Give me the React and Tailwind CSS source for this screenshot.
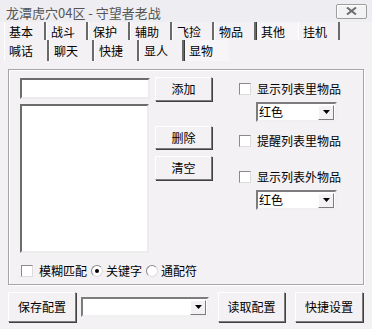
import React from 'react';

const FONT = { fontFamily: '"Noto Sans CJK SC", "Liberation Sans", sans-serif' };

const Raised = ({ className = '', children }) => (
  <div
    className={`flex items-center justify-center bg-[#f4f1f4] border border-t-white border-l-white border-r-[#7c7c7c] border-b-[#7c7c7c] shadow-[1px_1px_0_#404040] text-[12px] text-black ${className}`}
  >
    {children}
  </div>
);

const Check = () => (
  <span className="block w-[12px] h-[12px] bg-white border border-t-[#8a8a8a] border-l-[#8a8a8a] border-r-[#dcdcdc] border-b-[#dcdcdc] shrink-0" />
);

const Radio = ({ on }) => (
  <span className="flex items-center justify-center w-[12px] h-[12px] rounded-full bg-white border border-t-[#8a8a8a] border-l-[#8a8a8a] border-r-[#dcdcdc] border-b-[#dcdcdc] shrink-0">
    {on && <span className="block w-[4px] h-[4px] rounded-full bg-black" />}
  </span>
);

const Arrow = () => (
  <span className="flex items-center justify-center w-[16px] h-[15px] bg-[#f4f1f4] border border-t-white border-l-white border-r-[#7c7c7c] border-b-[#7c7c7c]">
    <svg width="7" height="4" viewBox="0 0 7 4">
      <path d="M0 0h7L3.5 4z" fill="#000" />
    </svg>
  </span>
);

const Select = ({ value, className = '' }) => (
  <div
    className={`flex items-center justify-between bg-white border-2 border-t-[#7c7c7c] border-l-[#7c7c7c] border-r-[#f0f0f0] border-b-[#f0f0f0] pr-[1px] ${className}`}
  >
    <span className="pl-[1px] text-[12px] leading-none text-black">{value}</span>
    <Arrow />
  </div>
);

const row1 = ['基本', '战斗', '保护', '辅助', '飞捡', '物品', '其他', '挂机'];
const row2 = ['喊话', '聊天', '快捷', '显人', '显物'];

const Tab = ({ label, active, wide }) => (
  <div
    className={`flex items-center ${wide ? 'w-[45px] h-[21px] pt-[1px]' : 'w-[42px] h-[18px] pt-[2px]'} pl-[4px] text-[12px] text-black border-l border-r-2 ${
      active ? 'border-l-[#3a3a3a] border-r-transparent bg-[#f7f5f7]' : 'border-l-white border-r-[#6a6a6a]'
    }`}
  >
    {label}
  </div>
);

export default function App() {
  return (
    <div className="w-[372px] h-[329px] bg-[#f4f1f4] overflow-hidden" style={FONT}>
      {/* title bar */}
      <div className="h-[22px] flex items-center justify-between pl-[6px] pr-[5px] bg-[#eeedf1]">
        <span className="pt-[2px] text-[13px] text-[#555] leading-none">龙潭虎穴04区 - 守望者老战</span>
        <div className="w-[31px] h-[15px] flex items-center justify-center rounded-[2px] border border-[#9c9c9c] bg-[#f2f2f4] shadow-[inset_1px_1px_0_#fff]">
          <svg width="11" height="8" viewBox="0 0 11 8">
            <path d="M1 0.5l9 7M10 0.5l-9 7" stroke="#6e6e6e" strokeWidth="2" />
          </svg>
        </div>
      </div>

      {/* tabs */}
      <div className="flex pl-[4px] h-[18px]">
        {row1.map((t) => (
          <Tab key={t} label={t} active={t === '其他'} />
        ))}
      </div>
      <div className="flex pl-[4px] h-[21px]">
        {row2.map((t) => (
          <Tab key={t} label={t} active={t === '显物'} wide />
        ))}
      </div>

      {/* group panel */}
      <div className="ml-[8px] mt-[8px] w-[356px] h-[216px] border border-[#a8a4a8] shadow-[inset_1px_1px_0_#fff,1px_1px_0_#fff] pt-[8px] pl-[11px]">
        <div className="flex">
          {/* left column */}
          <div className="w-[130px] flex flex-col">
            <div className="h-[21px] bg-white border-2 border-t-[#6c6c6c] border-l-[#6c6c6c] border-r-[#ececec] border-b-[#ececec]" />
            <div className="mt-[5px] h-[149px] w-[129px] bg-white border-2 border-t-[#6c6c6c] border-l-[#6c6c6c] border-r-[#ececec] border-b-[#ececec]" />
          </div>

          {/* middle buttons */}
          <div className="ml-[5px] -mt-[1px] flex flex-col">
            <Raised className="w-[57px] h-[24px]">添加</Raised>
            <Raised className="w-[57px] h-[23px] mt-[25px]">删除</Raised>
            <Raised className="w-[57px] h-[24px] mt-[7px]">清空</Raised>
          </div>

          {/* right options */}
          <div className="ml-[27px] flex flex-col">
            <div className="mt-[4px] h-[14px] flex items-center gap-[6px] text-[12px] text-black">
              <Check />
              <span>显示列表里物品</span>
            </div>
            <Select value="红色" className="ml-[17px] mt-[6px] w-[81px] h-[20px]" />
            <div className="mt-[12px] h-[14px] flex items-center gap-[6px] text-[12px] text-black">
              <Check />
              <span>提醒列表里物品</span>
            </div>
            <div className="mt-[22px] h-[14px] flex items-center gap-[6px] text-[12px] text-black">
              <Check />
              <span>显示列表外物品</span>
            </div>
            <Select value="红色" className="ml-[17px] mt-[6px] w-[81px] h-[20px]" />
          </div>
        </div>

        {/* match row */}
        <div className="mt-[11px] ml-[1px] h-[14px] flex items-center text-[12px] text-black">
          <Check />
          <span className="ml-[6px]">模糊匹配</span>
          <span className="ml-[4px]">
            <Radio on />
          </span>
          <span className="ml-[3px]">关键字</span>
          <span className="ml-[4px]">
            <Radio />
          </span>
          <span className="ml-[3px]">通配符</span>
        </div>
      </div>

      {/* bottom row */}
      <div className="mt-[7px] pl-[8px] flex items-center">
        <Raised className="w-[68px] h-[30px]">保存配置</Raised>
        <Select value="" className="ml-[5px] w-[128px] h-[20px]" />
        <Raised className="ml-[9px] w-[67px] h-[30px]">读取配置</Raised>
        <Raised className="ml-[10px] w-[68px] h-[30px]">快捷设置</Raised>
      </div>
    </div>
  );
}
